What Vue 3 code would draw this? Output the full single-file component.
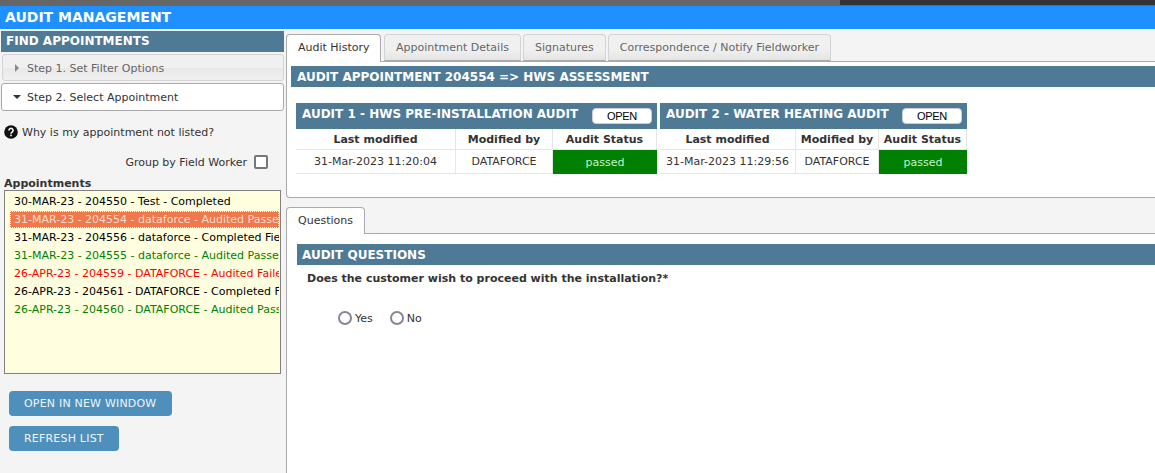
<script setup>
const appointments = [
  { text: '30-MAR-23 - 204550 - Test - Completed', tone: 'black' },
  { text: '31-MAR-23 - 204554 - dataforce - Audited Passed', tone: 'selected' },
  { text: '31-MAR-23 - 204556 - dataforce - Completed Fieldwork', tone: 'black' },
  { text: '31-MAR-23 - 204555 - dataforce - Audited Passed', tone: 'green' },
  { text: '26-APR-23 - 204559 - DATAFORCE - Audited Failed', tone: 'red' },
  { text: '26-APR-23 - 204561 - DATAFORCE - Completed Fieldwork', tone: 'black' },
  { text: '26-APR-23 - 204560 - DATAFORCE - Audited Passed', tone: 'green' }
]
const topTabs = ['Appointment Details', 'Signatures', 'Correspondence / Notify Fieldworker']
const audits = [
  { title: 'AUDIT 1 - HWS PRE-INSTALLATION AUDIT', modified: '31-Mar-2023 11:20:04', cols: '160px 97px 104px', width: '361px' },
  { title: 'AUDIT 2 - WATER HEATING AUDIT', modified: '31-Mar-2023 11:29:56', cols: '136px 83px 88px', width: '307px' }
]
</script>

<template>
  <div class="page">
    <div class="topstrip"><div class="strip-dark"></div></div>
    <header class="appbar">AUDIT MANAGEMENT</header>
    <div class="main">
      <aside class="side">
        <div class="band side-band">FIND APPOINTMENTS</div>
        <div class="step step-closed"><span class="tri-right"></span>Step 1. Set Filter Options</div>
        <div class="step step-open"><span class="tri-down"></span>Step 2. Select Appointment</div>
        <div class="why">
          <svg class="help" width="14" height="14" viewBox="0 0 14 14">
            <circle cx="7" cy="7" r="6.8" fill="#111" />
            <path d="M4.9 5.4a2.1 2 0 1 1 3.2 1.7c-.8.5-1.1.8-1.1 1.6" fill="none" stroke="#fff" stroke-width="1.5" />
            <rect x="6.2" y="9.6" width="1.6" height="1.6" fill="#fff" />
          </svg>
          <span>Why is my appointment not listed?</span>
        </div>
        <div class="group">
          <span>Group by Field Worker</span>
          <span class="check"></span>
        </div>
        <div class="list-label">Appointments</div>
        <div class="list">
          <div v-for="a in appointments" :key="a.text" class="item" :class="a.tone">{{ a.text }}</div>
        </div>
        <div class="actions">
          <button class="action">OPEN IN NEW WINDOW</button>
          <button class="action">REFRESH LIST</button>
        </div>
      </aside>

      <section class="content">
        <nav class="tabs">
          <div class="tab active">Audit History</div>
          <div v-for="t in topTabs" :key="t" class="tab">{{ t }}</div>
        </nav>
        <div class="panel">
          <div class="band panel-band">AUDIT APPOINTMENT 204554 =&gt; HWS ASSESSMENT</div>
          <div class="audits">
            <div v-for="a in audits" :key="a.title" class="audit" :style="{ width: a.width }">
              <div class="audit-head">
                <span class="audit-title">{{ a.title }}</span>
                <button class="open">OPEN</button>
              </div>
              <div class="grid" :style="{ gridTemplateColumns: a.cols }">
                <div class="cell th">Last modified</div>
                <div class="cell th">Modified by</div>
                <div class="cell th">Audit Status</div>
                <div class="cell td">{{ a.modified }}</div>
                <div class="cell td">DATAFORCE</div>
                <div class="cell passed">passed</div>
              </div>
            </div>
          </div>
        </div>

        <nav class="tabs tabs-lower">
          <div class="tab active">Questions</div>
        </nav>
        <div class="questions">
          <div class="band q-band">AUDIT QUESTIONS</div>
          <div class="question">Does the customer wish to proceed with the installation?*</div>
          <div class="radios">
            <label class="radio"><span class="dot"></span>Yes</label>
            <label class="radio"><span class="dot"></span>No</label>
          </div>
        </div>
      </section>
    </div>
  </div>
</template>

<style>
html, body { margin: 0; padding: 0; overflow: hidden; background: #f4f4f4; }
</style>

<style scoped>
.page {
  width: 1155px;
  height: 473px;
  overflow: hidden;
  font-family: "DejaVu Sans", sans-serif;
  font-size: 11px;
  color: #333;
  background: #f4f4f4;
}
.topstrip { height: 6px; background: #666; display: flex; justify-content: flex-end; }
.strip-dark { width: 315px; height: 5px; background: #333; }
.appbar {
  height: 23px;
  line-height: 23px;
  padding-left: 5px;
  background: #1e90ff;
  color: #fff;
  font-weight: bold;
  font-size: 14px;
}
.main { display: flex; height: 444px; }
.side {
  width: 286px;
  flex: none;
  box-sizing: border-box;
  padding: 2px 0 0 1px;
}
.band {
  background: #4f7a96;
  color: #fff;
  font-weight: bold;
  font-size: 12px;
}
.side-band { height: 21px; line-height: 21px; padding-left: 5px; width: 283px; box-sizing: border-box; }
.step {
  box-sizing: border-box;
  width: 283px;
  display: flex;
  align-items: center;
  border-radius: 3px;
}
.step-closed {
  height: 27px;
  margin-top: 2px;
  margin-left: 1px;
  width: 282px;
  padding-top: 1px;
  background: linear-gradient(#f0f0f0 50%, #e8e8e8 50%, #f0f0f0);
  border: 1px solid #d3d3d3;
  color: #666;
  padding-left: 12px;
}
.step-open {
  height: 28px;
  margin-top: 2px;
  background: #fff;
  border: 1px solid #aaa;
  color: #333;
  padding-left: 11px;
}
.tri-right {
  width: 0; height: 0; margin-right: 8px;
  border-left: 4px solid #888;
  border-top: 4px solid transparent;
  border-bottom: 4px solid transparent;
}
.tri-down {
  width: 0; height: 0; margin-right: 6px;
  border-top: 4px solid #333;
  border-left: 4px solid transparent;
  border-right: 4px solid transparent;
}
.why {
  display: flex;
  align-items: center;
  gap: 4px;
  margin: 14px 0 0 3px;
  height: 14px;
}
.help { flex: none; }
.group {
  display: flex;
  justify-content: flex-end;
  align-items: center;
  gap: 7px;
  height: 14px;
  margin-top: 16px;
  padding-right: 18px;
}
.check {
  width: 10px; height: 10px;
  border: 2px solid #777;
  border-radius: 2px;
  background: #fff;
}
.list-label {
  margin: 8px 0 0 3px;
  font-weight: bold;
  line-height: 13px;
}
.list {
  box-sizing: border-box;
  width: 277px;
  height: 184px;
  margin: 0 0 0 3px;
  padding: 2px 0 0 5px;
  border: 1px solid #808080;
  background: #ffffe0;
  overflow: hidden;
}
.item {
  height: 18px;
  line-height: 18px;
  width: 269px;
  padding-left: 4px;
  box-sizing: border-box;
  white-space: nowrap;
  overflow: hidden;
}
.black { color: #000; }
.green { color: #008000; }
.red { color: #f00; }
.selected {
  height: 17px;
  margin-bottom: 1px;
  background: #f0784a;
  color: #f8ddd2;
  outline: 1px dotted #fff;
  outline-offset: -1px;
}
.actions {
  display: flex;
  flex-direction: column;
  align-items: flex-start;
  gap: 10px;
  margin: 17px 0 0 8px;
}
.action {
  height: 25px;
  padding: 0 15.5px 0 15px;
  border: none;
  border-radius: 4px;
  background: #4f8fbb;
  color: #eef5fa;
  font-family: inherit;
  font-size: 11px;
  letter-spacing: 0.2px;
}
.content { flex: 1; min-width: 0; padding-top: 5px; }
.tabs { display: flex; gap: 2px; height: 27px; position: relative; }
.tab {
  box-sizing: border-box;
  height: 27px;
  padding: 0 11px;
  line-height: 25px;
  border: 1px solid #d3d3d3;
  border-bottom: 1px solid #aaa;
  border-radius: 4px 4px 0 0;
  background: linear-gradient(#f0f0f0 60%, #e4e4e4);
  color: #666;
}
.tab.active {
  height: 28px;
  margin-right: 0.5px;
  background: #fff;
  color: #333;
  border: 1px solid #aaa;
  border-bottom: none;
  position: relative;
  z-index: 1;
}
.panel {
  box-sizing: border-box;
  height: 137px;
  padding: 4px 0 0 4px;
  background: #fff;
  border-top: 1px solid #aaa;
  border-left: 1px solid #aaa;
  border-bottom: 1px solid #aaa;
  border-radius: 0 0 0 4px;
}
.panel-band { height: 21px; line-height: 22px; padding-left: 6px; }
.audits { display: flex; gap: 3px; margin: 16px 0 0 5px; }
.audit { flex: none; }
.audit-head {
  box-sizing: border-box;
  height: 26px;
  background: #4f7a96;
  display: flex;
  justify-content: space-between;
  align-items: flex-start;
  padding-left: 6px;
}
.audit-title {
  color: #fff;
  font-weight: bold;
  font-size: 12px;
  line-height: 22px;
  white-space: nowrap;
}
.open {
  width: 60px;
  height: 16px;
  margin: 5px 5px 0 0;
  padding: 1px 0 0;
  border: 1px solid #ccd;
  border-radius: 4px;
  background: #fff;
  color: #000;
  font-family: "Liberation Sans", sans-serif;
  font-size: 11px;
  letter-spacing: -0.3px;
  line-height: 13px;
}
.grid { display: grid; grid-template-rows: 21px 24px; }
.cell {
  box-sizing: border-box;
  display: flex;
  align-items: center;
  justify-content: center;
  background: #fff;
  white-space: nowrap;
  border-bottom: 1px solid #e6e6e6;
  border-right: 1px solid #e6e6e6;
}
.th { font-weight: bold; }
.passed { background: #008000; color: #c8f0c8; border: none; }
.tabs-lower { margin-top: 9px; height: 26px; }
.tabs-lower .tab.active { height: 27px; }
.questions {
  box-sizing: border-box;
  height: 240px;
  padding: 10px 0 0 10px;
  background: #fff;
  border-top: 1px solid #aaa;
  border-left: 1px solid #aaa;
}
.q-band { height: 21px; line-height: 22px; padding-left: 5px; }
.question {
  margin: 7px 0 0 10px;
  font-weight: bold;
  line-height: 14px;
}
.radios { display: flex; gap: 17px; margin: 25px 0 0 41px; }
.radio { display: flex; align-items: center; gap: 3px; height: 14px; }
.dot {
  box-sizing: border-box;
  width: 14px; height: 14px;
  border: 2px solid #8a8494;
  border-radius: 50%;
  background: #fff;
}
</style>
